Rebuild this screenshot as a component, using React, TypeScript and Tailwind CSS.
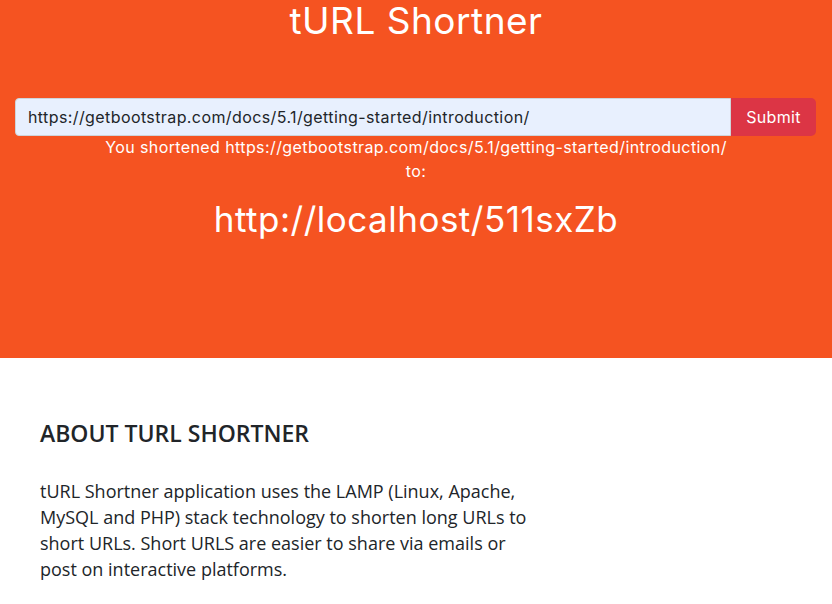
import React from "react";

export default function App() {
  const url = "https://getbootstrap.com/docs/5.1/getting-started/introduction/";
  return (
    <div className="min-h-[604px] bg-white">
      <section className="h-[358px] bg-[#f55321] text-white font-['Inter',sans-serif] flex flex-col items-center">
        <h1 className="pt-[1px] text-[37px] leading-[40px] font-normal tracking-[0.5px]">tURL Shortner</h1>
        <div className="mt-[57px] w-full px-[15px] pr-[16px] flex">
          <input
            readOnly
            value={url}
            className="flex-1 h-[38px] bg-[#e8f0fe] text-[#212529] border border-[#ced4da] rounded-l-[4px] px-[12px] text-[16px] tracking-[0.4px] outline-none"
          />
          <button className="h-[38px] w-[85px] bg-[#dc3545] text-white rounded-r-[5px] text-[16px] tracking-[0.3px]">Submit</button>
        </div>
        <p className="mt-[-1px] text-[16px] leading-[24px] tracking-[0.4px] text-center">
          You shortened {url}
          <br />
          to:
        </p>
        <div className="mt-[11px] text-[35px] leading-[50px] tracking-[0.5px]">http://localhost/511sxZb</div>
      </section>
      <section className="px-[40px] pt-[61px] font-['Open_Sans',sans-serif] text-[#212529]">
        <h2 className="text-[23px] leading-[28px] font-semibold">ABOUT TURL SHORTNER</h2>
        <p className="mt-[31px] w-[500px] text-[18px] leading-[26px]">
          tURL Shortner application uses the LAMP (Linux, Apache, MySQL and PHP) stack technology to shorten long URLs to short URLs. Short URLS are easier to share via emails or post on interactive platforms.
        </p>
      </section>
    </div>
  );
}
